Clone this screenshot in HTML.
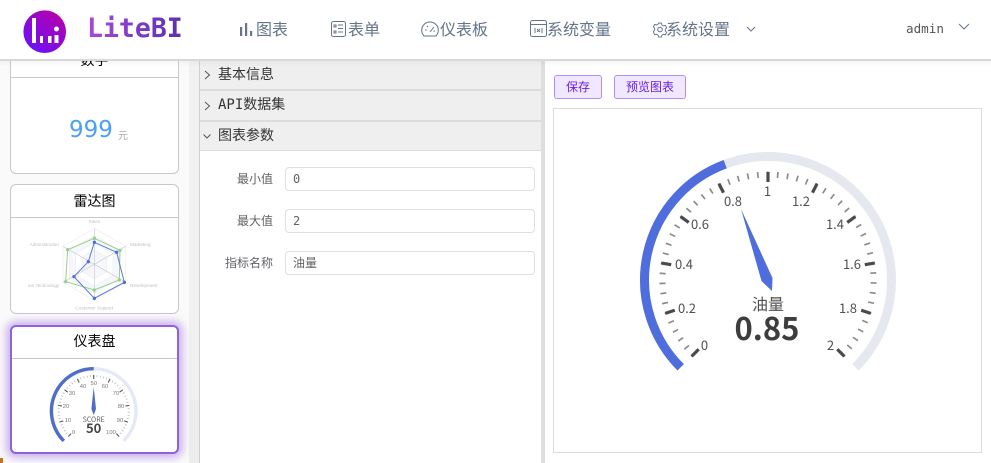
<!DOCTYPE html>
<html lang="zh">
<head>
<meta charset="utf-8">
<style>
html,body{margin:0;padding:0;width:991px;height:463px;overflow:hidden;background:#fff}
body{position:relative;font-family:"Liberation Sans","Noto Sans CJK SC",sans-serif}
div,span{position:absolute;box-sizing:border-box;white-space:nowrap}
svg{position:absolute;overflow:visible}
.nav{font-family:"Noto Sans CJK SC",sans-serif;font-size:16px;line-height:20px;top:18px;color:#64748b}
.card{left:10px;width:169px;background:#fff;border:1px solid #c8c8c8;border-radius:6px}
.ct{font-family:"Noto Sans CJK SC",sans-serif;font-size:14px;color:#000;left:0;width:100%;text-align:center;line-height:20px}
.ln{left:0;width:100%;height:1px;background:#c8c8c8}
.acc{left:200px;width:341px;height:29px;background:#efefef;font-family:"DejaVu Sans Mono","WenQuanYi Zen Hei",monospace;font-size:14px;line-height:29px;color:#333;padding-left:18px}
.lab{left:200px;width:73px;text-align:right;font-family:"Noto Sans CJK SC",sans-serif;font-size:12px;line-height:16px;color:#606266}
.inp{left:285px;width:250px;height:24px;border:1px solid #dcdfe6;border-radius:4px;background:#fff;font-family:"DejaVu Sans Mono","WenQuanYi Zen Hei",monospace;font-size:12px;line-height:22px;color:#606266;padding-left:7px}
.btn{top:75px;height:24px;background:#f0e8ff;border:1px solid #b48cff;border-radius:3px;font-family:"Noto Sans CJK SC",sans-serif;font-size:12px;line-height:22px;text-align:center;color:#6a20e0}
</style>
</head>
<body>
<!-- left panel -->
<div style="left:0;top:59px;width:189px;height:404px;background:#fafafa"></div>
<div style="left:189px;top:59px;width:11px;height:404px;background:#f1f1f1"></div>
<div style="left:189px;top:400px;width:11px;height:63px;background:#ededed"></div>
<div style="left:0;top:458px;width:3px;height:5px;background:#c8702a"></div>

<div class="card" style="top:40px;height:134px">
  <div class="ct" style="top:9px">数字</div>
  <div class="ln" style="top:36px"></div>
  <div style="left:58px;top:71px;font-family:'DejaVu Sans',sans-serif;font-size:23px;line-height:36px;color:#4c9ff6">999</div>
  <div style="left:107px;top:86px;font-family:'Noto Sans CJK SC',sans-serif;font-size:10px;line-height:16px;color:#aaa">元</div>
</div>

<div class="card" style="top:184px;height:130px">
  <div class="ct" style="top:6px">雷达图</div>
  <div class="ln" style="top:32px"></div>
</div>
<svg style="left:0;top:175px" width="200" height="145" viewBox="0 0 600 435">
  <g fill="none" stroke="#eeeeee" stroke-width="2">
    <polygon points="283,160 377,214 377,322 283,376 189,322 189,214" fill="#fff"/>
    <polygon points="283,182 358,225 358,311 283,354 208,311 208,225" fill="#f5f7fc"/>
    <polygon points="283,203 339,236 339,300 283,333 227,300 227,236" fill="#fff"/>
    <polygon points="283,225 320,246 320,290 283,311 246,290 246,246" fill="#f5f7fc"/>
  </g>
  <g stroke="#cccccc" stroke-width="2"><line x1="283" y1="268" x2="283" y2="160"/><line x1="283" y1="268" x2="377" y2="214"/><line x1="283" y1="268" x2="377" y2="322"/><line x1="283" y1="268" x2="283" y2="376"/><line x1="283" y1="268" x2="189" y2="322"/><line x1="283" y1="268" x2="189" y2="214"/></g>
  <polygon points="283,190 360,226 358,315 283,345 197,320 203,224" fill="none" stroke="#98d088" stroke-width="3"/>
  <polygon points="283,202 350,232 373,322 283,370 222,305 265,260" fill="none" stroke="#5a78d8" stroke-width="3"/>
  <g fill="#98d088"><circle cx="283" cy="190" r="5"/><circle cx="360" cy="226" r="5"/><circle cx="358" cy="315" r="5"/><circle cx="283" cy="345" r="5"/><circle cx="197" cy="320" r="5"/><circle cx="203" cy="224" r="5"/></g>
  <g fill="#4f6fd8"><circle cx="283" cy="202" r="5"/><circle cx="350" cy="232" r="5"/><circle cx="373" cy="322" r="5"/><circle cx="283" cy="370" r="5"/><circle cx="222" cy="305" r="5"/><circle cx="265" cy="260" r="5"/></g>
  <g font-family="Liberation Sans, sans-serif" font-size="14" fill="#c0c0c0">
    <text x="283" y="144" text-anchor="middle">Sales</text>
    <text x="390" y="213">Marketing</text>
    <text x="390" y="336">Development</text>
    <text x="283" y="404" text-anchor="middle">Customer Support</text>
    <text x="177" y="336" text-anchor="end">ion Technology</text>
    <text x="177" y="213" text-anchor="end">Administration</text>
  </g>
</svg>

<div class="card" style="top:325px;height:129px;border:2px solid #8f62dd;box-shadow:0 0 8px 4px rgba(150,95,225,.45)">
  <div class="ct" style="top:4px">仪表盘</div>
  <div class="ln" style="top:31px"></div>
</div>
<svg style="left:0;top:0" width="200" height="463" viewBox="0 0 200 463">
  <path d="M63.8 440.9A42.3 42.3 0 1 1 123.6 440.9" fill="none" stroke="#e3e9f6" stroke-width="3.4"/>
  <path d="M63.8 440.9A42.3 42.3 0 0 1 93.7 368.7" fill="none" stroke="#4f6ec8" stroke-width="3.4"/>
  <path d="M68.950 435.750A35 35 0 1 1 118.450 435.750" fill="none" stroke="#999" stroke-width="2" pathLength="270" stroke-dasharray="0.9 4.5" stroke-dashoffset="0.45"/>
  <g stroke="#555" stroke-width="1.100">
    <line x1="93.7" y1="375" x2="93.7" y2="379" transform="rotate(-135 93.7 411)"/><line x1="93.7" y1="375" x2="93.7" y2="379" transform="rotate(-108 93.7 411)"/><line x1="93.7" y1="375" x2="93.7" y2="379" transform="rotate(-81 93.7 411)"/><line x1="93.7" y1="375" x2="93.7" y2="379" transform="rotate(-54 93.7 411)"/><line x1="93.7" y1="375" x2="93.7" y2="379" transform="rotate(-27 93.7 411)"/><line x1="93.7" y1="375" x2="93.7" y2="379"/><line x1="93.7" y1="375" x2="93.7" y2="379" transform="rotate(27 93.7 411)"/><line x1="93.7" y1="375" x2="93.7" y2="379" transform="rotate(54 93.7 411)"/><line x1="93.7" y1="375" x2="93.7" y2="379" transform="rotate(81 93.7 411)"/><line x1="93.7" y1="375" x2="93.7" y2="379" transform="rotate(108 93.7 411)"/><line x1="93.7" y1="375" x2="93.7" y2="379" transform="rotate(135 93.7 411)"/>
  </g>
  <g font-family="Liberation Sans, sans-serif" font-size="5.800" fill="#777" text-anchor="middle">
    <text x="73.5" y="434">0</text><text x="68" y="422">10</text><text x="66" y="408">20</text><text x="72" y="395">30</text><text x="83" y="388">40</text><text x="93.7" y="385">50</text><text x="105" y="388">60</text><text x="116" y="395">70</text><text x="121" y="408">80</text><text x="120" y="422">90</text><text x="111" y="434">100</text>
  </g>
  <polygon points="93.7,387 96,409 93.7,415 91.400,409" fill="#4f6ec8"/>
  <text x="93.7" y="422" font-family="Noto Sans CJK SC, sans-serif" font-size="7" fill="#666" text-anchor="middle">SCORE</text>
  <text x="93.7" y="433" font-family="Noto Sans CJK SC, sans-serif" font-size="13" font-weight="700" fill="#464646" text-anchor="middle">50</text>
</svg>

<!-- middle panel -->
<div style="left:199px;top:59px;width:1px;height:404px;background:#d0d0d0"></div>
<div style="left:200px;top:59px;width:341px;height:404px;background:#fff"></div>
<div class="acc" style="top:61px">基本信息</div>
<div style="left:200px;top:89px;width:341px;height:2px;background:#dcdcdc"></div>
<div class="acc" style="top:91px">API数据集</div>
<div style="left:200px;top:120px;width:341px;height:2px;background:#dcdcdc"></div>
<div class="acc" style="top:122px">图表参数</div>
<div style="left:200px;top:150px;width:341px;height:1px;background:#dcdcdc"></div>
<svg style="left:200px;top:60px" width="16" height="90" fill="none" stroke="#555" stroke-width="1">
  <path d="M5 11L9.500 15L5 19"/><path d="M5 42L9.500 46L5 50"/><path d="M3.500 74.500L7 78L10.500 74.500"/>
</svg>
<div class="lab" style="top:171px">最小值</div>
<div class="inp" style="top:167px">0</div>
<div class="lab" style="top:213px">最大值</div>
<div class="inp" style="top:209px">2</div>
<div class="lab" style="top:255px">指标名称</div>
<div class="inp" style="top:251px">油量</div>

<!-- splitter / right panel -->
<div style="left:541px;top:59px;width:4px;height:404px;background:#dedede"></div>
<div class="btn" style="left:554px;width:48px">保存</div>
<div class="btn" style="left:614px;width:72px">预览图表</div>
<div style="left:553px;top:108px;width:429px;height:345px;border:1px solid #dcdcdc"></div>

<svg style="left:0;top:0" width="991" height="463" viewBox="0 0 991 463">
  <path d="M680.670 367.330A123.500 123.500 0 1 1 855.330 367.330" fill="none" stroke="#e5e8ef" stroke-width="9"/>
  <path d="M680.670 367.330A123.500 123.500 0 0 1 725.200 164.200" fill="none" stroke="#4f6ddc" stroke-width="9"/>
  <path d="M693.400 354.600A105.500 105.500 0 1 1 842.600 354.600" fill="none" stroke="#8a8a8a" stroke-width="6" pathLength="270" stroke-dasharray="0.9 4.5" stroke-dashoffset="0.45"/>
  <g stroke="#4a4a4a" stroke-width="3.200">
    <line x1="768" y1="172" x2="768" y2="182" transform="rotate(-135 768 280)"/><line x1="768" y1="172" x2="768" y2="182" transform="rotate(-108 768 280)"/><line x1="768" y1="172" x2="768" y2="182" transform="rotate(-81 768 280)"/><line x1="768" y1="172" x2="768" y2="182" transform="rotate(-54 768 280)"/><line x1="768" y1="172" x2="768" y2="182" transform="rotate(-27 768 280)"/><line x1="768" y1="172" x2="768" y2="182"/><line x1="768" y1="172" x2="768" y2="182" transform="rotate(27 768 280)"/><line x1="768" y1="172" x2="768" y2="182" transform="rotate(54 768 280)"/><line x1="768" y1="172" x2="768" y2="182" transform="rotate(81 768 280)"/><line x1="768" y1="172" x2="768" y2="182" transform="rotate(108 768 280)"/><line x1="768" y1="172" x2="768" y2="182" transform="rotate(135 768 280)"/>
  </g>
  <g font-family="Noto Sans CJK SC, sans-serif" font-size="13" fill="#505050" text-anchor="middle">
    <text x="704.5" y="350">0</text><text x="687" y="313">0.2</text><text x="684" y="269">0.4</text><text x="700" y="229">0.6</text><text x="733" y="206">0.8</text><text x="767.5" y="196">1</text><text x="801" y="206">1.2</text><text x="835" y="229">1.4</text><text x="852" y="269">1.6</text><text x="848" y="313">1.8</text><text x="830.5" y="350">2</text>
  </g>
  <polygon points="741,209 772.5,278 772,291 761.5,281" fill="#4f6ddc"/>
  <text x="768" y="310" font-family="Noto Sans CJK SC, sans-serif" font-size="16" fill="#505050" text-anchor="middle">油量</text>
  <text x="767" y="340" font-family="Noto Sans CJK SC, sans-serif" font-size="31" font-weight="700" fill="#3d3d3d" text-anchor="middle">0.85</text>
</svg>

<!-- header -->
<div style="left:0;top:0;width:991px;height:61px;background:#fff;border-bottom:2px solid #d8d8d8"></div>
<div style="left:0;top:61px;width:991px;height:6px;background:linear-gradient(#00000008,#00000000)"></div>
<svg style="left:23px;top:10px" width="44" height="44" viewBox="0 0 44 44">
  <defs><linearGradient id="lg" x1="0.85" y1="0.1" x2="0.2" y2="0.95"><stop offset="0" stop-color="#b400ae"/><stop offset="1" stop-color="#6a12f6"/></linearGradient></defs>
  <circle cx="21.700" cy="21.700" r="21.300" fill="url(#lg)"/>
  <g fill="#fff"><rect x="9" y="8" width="4" height="25"/><rect x="17" y="26" width="3" height="7"/><rect x="25" y="26" width="3.500" height="7"/><rect x="31.500" y="25" width="4" height="8"/><circle cx="33.500" cy="19" r="2.500"/></g>
</svg>
<div style="left:87px;top:12px;font-family:'DejaVu Sans Mono',monospace;font-weight:700;font-size:26.5px;line-height:34px;background:linear-gradient(90deg,#a848dc,#5a2fb0);-webkit-background-clip:text;background-clip:text;color:transparent">LiteBI</div>

<svg style="left:239px;top:22px" width="14" height="14" fill="#64748b"><rect x="1" y="5" width="2.2" height="9"/><rect x="6" y="1" width="2.2" height="13"/><rect x="11" y="9" width="2.2" height="5"/></svg>
<div class="nav" style="left:256px">图表</div>
<svg style="left:331px;top:21px" width="15" height="16" fill="none" stroke="#64748b" stroke-width="1"><rect x="0.5" y="0.5" width="14" height="15" rx="2"/><path d="M3 4h2v2h-2zM3 10h2v2h-2zM7 4h5M7 7.5h5M7 11h5"/></svg>
<div class="nav" style="left:348px">表单</div>
<svg style="left:421px;top:21px" width="18" height="16" fill="none" stroke="#64748b" stroke-width="1"><path d="M3 15A8.3 8.3 0 1 1 15 15Z"/><path d="M9 11L13 6M4 9h1.5M6 5l1 1M12.5 10h1.500"/></svg>
<div class="nav" style="left:440px">仪表板</div>
<svg style="left:530px;top:20px" width="17" height="17" fill="none" stroke="#64748b" stroke-width="1"><rect x="0.5" y="0.5" width="16" height="16" rx="2"/><path d="M0.500 4.500h16"/><path d="M5 8v5M12 8v5M7 9l3 3M10 9l-3 3"/></svg>
<div class="nav" style="left:547px">系统变量</div>
<svg style="left:653px;top:22px" width="14" height="15" viewBox="0 0 14 15" fill="none" stroke="#64748b" stroke-width="1"><path d="M5.500 1h3l.5 2 1.800 1 2-.6 1.400 2.600-1.500 1.500 0 1-0 1 1.500 1.500-1.400 2.600-2-.6-1.800 1-.5 2h-3l-.5-2-1.800-1-2 .6L-.2 10l1.500-1.500v-2L-.2 5l1.400-2.600 2 .6 1.800-1z" transform="translate(0.500 0.200) scale(.93)"/><circle cx="7" cy="7.500" r="2.300"/></svg>
<div class="nav" style="left:666px">系统设置</div>
<svg style="left:746px;top:26px" width="10" height="7" fill="none" stroke="#64748b" stroke-width="1"><path d="M1 1L5 5L9 1"/></svg>
<div style="left:906px;top:19px;font-family:'DejaVu Sans Mono',monospace;font-size:12.600px;line-height:20px;color:#555">admin</div>
<svg style="left:958px;top:23px" width="12" height="8" fill="none" stroke="#64748b" stroke-width="1"><path d="M1 1L6 6L11 1"/></svg>
</body>
</html>
